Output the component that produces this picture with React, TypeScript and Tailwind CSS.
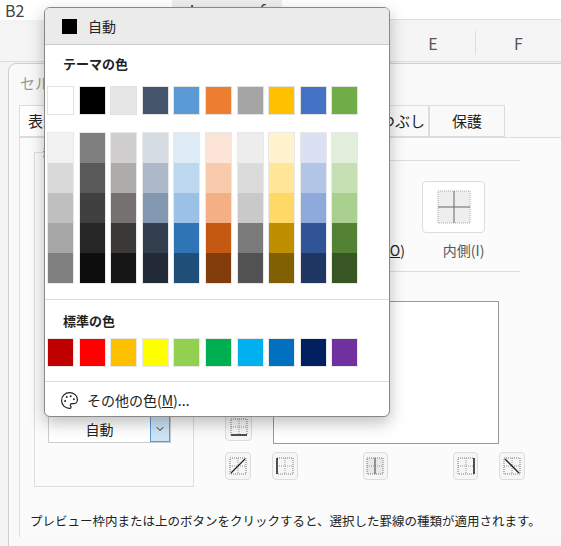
import { X, Check, ChevronDown, Palette } from "lucide-react";

const themeTop = ["#ffffff", "#000000", "#e7e6e6", "#44546a", "#5b9bd5", "#ed7d31", "#a5a5a5", "#ffc000", "#4472c4", "#70ad47"];
const shades = [
  ["#f2f2f2", "#d9d9d9", "#bfbfbf", "#a6a6a6", "#808080"],
  ["#7f7f7f", "#595959", "#404040", "#262626", "#0d0d0d"],
  ["#d0cece", "#aeabab", "#757171", "#3b3838", "#171616"],
  ["#d6dce4", "#adb9ca", "#8497b0", "#333f4f", "#222b35"],
  ["#ddebf7", "#bdd7ee", "#9bc2e6", "#2f75b5", "#1f4e78"],
  ["#fce4d6", "#f8cbad", "#f4b084", "#c65911", "#833c0c"],
  ["#ededed", "#dbdbdb", "#c9c9c9", "#7b7b7b", "#525252"],
  ["#fff2cc", "#ffe699", "#ffd966", "#bf8f00", "#806000"],
  ["#d9e1f2", "#b4c6e7", "#8ea9db", "#305496", "#203764"],
  ["#e2efda", "#c6e0b4", "#a9d08e", "#548235", "#375623"],
];
const standard = ["#c00000", "#ff0000", "#ffc000", "#ffff00", "#92d050", "#00b050", "#00b0f0", "#0070c0", "#002060", "#7030a0"];

const font = { fontFamily: '"Noto Sans CJK JP", "Noto Sans", sans-serif' };

function BorderBtn({ kind }: { kind: string }) {
  return (
    <div className="w-[27px] h-[28px] rounded border border-[#dcdcdc] bg-[#f6f6f6] flex items-center justify-center">
      <svg width="20" height="20" viewBox="0 0 20 20">
        <rect x="2" y="2" width="16" height="16" fill={kind === "mid" ? "#e8e8e8" : "none"} stroke="#777" strokeDasharray="1 1" />
        <line x1="10" y1="2" x2="10" y2="18" stroke="#999" strokeDasharray="1 1" />
        <line x1="2" y1="10" x2="18" y2="10" stroke="#999" strokeDasharray="1 1" />
        {kind === "bottom" && <line x1="2" y1="18" x2="18" y2="18" stroke="#222" strokeWidth="1.5" />}
        {kind === "left" && <line x1="2" y1="2" x2="2" y2="18" stroke="#222" strokeWidth="1.5" />}
        {kind === "right" && <line x1="18" y1="2" x2="18" y2="18" stroke="#222" strokeWidth="1.5" />}
        {kind === "mid" && <line x1="10" y1="2" x2="10" y2="18" stroke="#666" strokeWidth="1.2" />}
        {kind === "diagUp" && <line x1="3" y1="17" x2="17" y2="3" stroke="#222" strokeWidth="1.3" />}
        {kind === "diagDown" && <line x1="3" y1="3" x2="17" y2="17" stroke="#222" strokeWidth="1.3" />}
      </svg>
    </div>
  );
}

export default function App() {
  return (
    <div className="relative w-[561px] h-[546px] overflow-hidden bg-[#f3f3f3] text-[#222]" style={font}>
      {/* formula bar */}
      <div className="flex h-[20px] bg-white items-center">
        <div className="w-[150px] pl-[5px] text-[16px] text-[#444] leading-none">B2</div>
        <ChevronDown size={14} className="text-[#555]" />
        <div className="ml-2 h-full w-[110px] bg-[#eeeeee] flex items-center gap-4 px-3 text-[#999]">
          <span className="text-[#333]">⋮</span>
          <X size={16} />
          <Check size={16} />
          <span className="italic text-[#333] text-[16px]">fx</span>
        </div>
        <div className="flex-1 h-full bg-white border-b border-[#ddd]" />
      </div>
      {/* column headers */}
      <div className="flex h-[38px] mt-[4px] bg-[#f5f5f5] border-b border-[#ddd] text-[16px] text-[#555] items-center">
        <div className="w-[391px]" />
        <div className="w-[85px] text-center border-r border-[#ddd]">E</div>
        <div className="w-[85px] text-center">F</div>
      </div>

      {/* dialog */}
      <div className="absolute left-[8px] top-[63px] w-[580px] h-[500px] bg-[#f9f9f9] border border-[#cfcfcf] rounded-lg">
        <div className="pl-[11px] pt-[8px] text-[15px] text-[#999]">セル</div>
        <div className="flex mt-[10px] ml-[10px] text-[15px] whitespace-nowrap">
          <div className="px-2 py-1 border border-[#ddd] bg-white">表示形式</div>
          <div className="w-[282px]" />
          <div className="w-[50px] py-1 border border-[#ddd] text-right pr-1 overflow-hidden">つぶし</div>
          <div className="w-[76px] py-1 border border-[#ddd] text-center">保護</div>
        </div>
        <div className="ml-[10px] mr-0 h-[400px] border-t border-l border-[#ddd] bg-[#fbfbfb] flex">
          <div className="ml-[14px] mt-[14px] w-[160px] h-[335px] border border-[#ddd] flex flex-col">
            <div className="text-[14px] -mt-3 ml-2">線</div>
            <div className="flex-1" />
            <div className="ml-[13px] mb-[43px] w-[123px] h-[28px] bg-white border border-[#ccc] flex items-center">
              <span className="flex-1 text-center text-[14px]">自動</span>
              <span className="w-[20px] h-full bg-[#cce4f7] border border-[#5a9bd5] flex items-center justify-center">
                <ChevronDown size={12} />
              </span>
            </div>
          </div>
          <div className="ml-[31px] flex flex-col relative w-[300px]">
            <div className="mt-[22px] ml-[165px] w-[130px] border-t border-[#ddd]" />
            <div className="mt-[20px] ml-[197px] w-[63px] h-[52px] rounded border border-[#ddd] bg-white flex items-center justify-center">
              <svg width="34" height="34" viewBox="0 0 34 34">
                <rect x="1" y="1" width="32" height="32" fill="#eee" stroke="#aaa" strokeDasharray="1 1" />
                <line x1="17" y1="1" x2="17" y2="33" stroke="#666" />
                <line x1="1" y1="17" x2="33" y2="17" stroke="#666" />
              </svg>
            </div>
            <div className="ml-[160px] mt-[7px] text-[14px] text-[#555] flex gap-[38px]">
              <span className="text-[#222]">(<u>O</u>)</span>
              <span>内側(I)</span>
            </div>
            <div className="mt-[10px] ml-[165px] w-[130px] border-t border-[#ddd]" />
            <div className="mt-[29px] flex gap-[21px] ml-0">
              <div className="mt-[112px]"><BorderBtn kind="bottom" /></div>
              <div className="w-[226px] h-[143px] bg-white border border-[#999] relative">
                <span className="absolute left-[90px] top-[66px] text-[14px]">列</span>
              </div>
            </div>
            <div className="mt-[8px] flex">
              <BorderBtn kind="diagUp" />
              <div className="w-[23px]" />
              <BorderBtn kind="left" />
              <div className="w-[68px]" />
              <BorderBtn kind="mid" />
              <div className="w-[68px]" />
              <BorderBtn kind="right" />
              <div className="w-[22px]" />
              <BorderBtn kind="diagDown" />
            </div>
          </div>
        </div>
      </div>
      <div className="absolute left-[30px] top-[512px] text-[12.5px] whitespace-nowrap">プレビュー枠内または上のボタンをクリックすると、選択した罫線の種類が適用されます。</div>

      {/* color popup */}
      <div className="absolute left-[44px] top-[7px] w-[346px] h-[410px] bg-white border border-[#888] rounded-md shadow-[0_6px_16px_rgba(0,0,0,0.25)] overflow-hidden">
        <div className="h-[37px] bg-[#ebebeb] border-b border-[#ccc] flex items-center pl-[17px] gap-[11px]">
          <span className="w-[15px] h-[15px] bg-black" />
          <span className="text-[14px]">自動</span>
        </div>
        <div className="pl-[18px] pt-[9px] text-[13px] font-bold h-[34px]">テーマの色</div>
        <div className="flex gap-[4.6px] pl-[2px] mt-[7px]">
          {themeTop.map((c) => (
            <div key={c} className="w-[27px] h-[29px] border border-[#e2e2e2]" style={{ background: c }} />
          ))}
        </div>
        <div className="flex gap-[4.6px] pl-[2px] mt-[17px]">
          {shades.map((col, i) => (
            <div key={i} className="w-[27px] border border-[#e8e8e8]">
              {col.map((c) => (
                <div key={c} className="h-[30px]" style={{ background: c }} />
              ))}
            </div>
          ))}
        </div>
        <div className="mt-[15px] border-t border-[#ddd]" />
        <div className="pl-[18px] pt-[11px] text-[13px] font-bold h-[34px]">標準の色</div>
        <div className="flex gap-[4.6px] pl-[2px] mt-[4px]">
          {standard.map((c) => (
            <div key={c} className="w-[27px] h-[29px] border border-[#e8e8e8]" style={{ background: c }} />
          ))}
        </div>
        <div className="mt-[14px] border-t border-[#ddd]" />
        <div className="flex items-center pl-[15px] gap-[8px] h-[36px] text-[14px]">
          <Palette size={19} strokeWidth={1.5} />
          <span>その他の色(<u>M</u>)...</span>
        </div>
      </div>
    </div>
  );
}
